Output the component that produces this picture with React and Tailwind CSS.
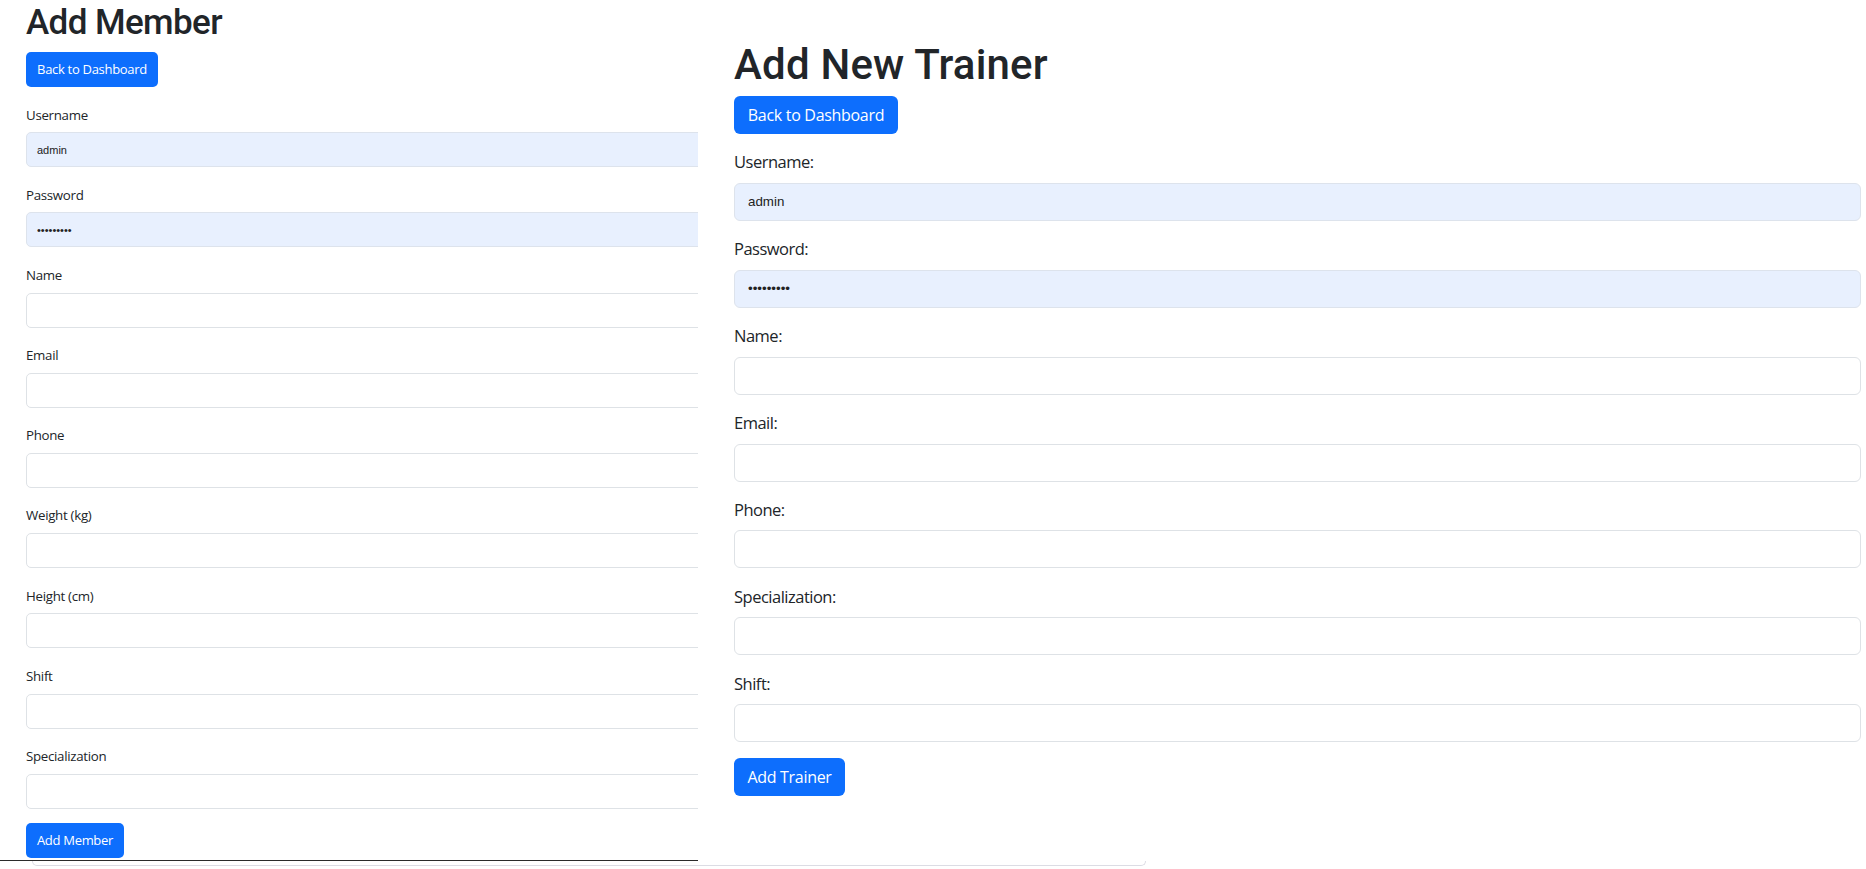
import React from 'react';

const uiFont = { fontFamily: '"Open Sans", "Noto Sans", sans-serif' };
const headFont = { fontFamily: 'Roboto, "Open Sans", sans-serif' };
const inputFont = { fontFamily: '"Liberation Sans", Arial, sans-serif' };

const memberFields = [
  { label: 'Username', value: 'admin', filled: true },
  { label: 'Password', value: 'adminpass', filled: true, type: 'password' },
  { label: 'Name' },
  { label: 'Email' },
  { label: 'Phone' },
  { label: 'Weight (kg)' },
  { label: 'Height (cm)' },
  { label: 'Shift' },
  { label: 'Specialization' },
];

const trainerFields = [
  { label: 'Username:', value: 'admin', filled: true },
  { label: 'Password:', value: 'adminpass', filled: true, type: 'password' },
  { label: 'Name:' },
  { label: 'Email:' },
  { label: 'Phone:' },
  { label: 'Specialization:' },
  { label: 'Shift:' },
];

const AddMemberPanel = () => {
  return (
    <div className="w-[698px] h-[861px] shrink-0 overflow-hidden border-b border-[#2b2b2b] bg-white pl-[26px] pt-[1.5px]">
      <h1 className="text-[35px] leading-[41px] font-medium tracking-[-0.6px] text-[#212529]" style={headFont}>
        Add Member
      </h1>
      <button className="mt-[9.5px] w-[132px] h-[35px] rounded-[5px] bg-[#0d6efd] text-white text-[13px] tracking-[-0.3px]">
        Back to Dashboard
      </button>
      {memberFields.map((f) => (
        <div key={f.label} className="mt-[17.5px] flex flex-col">
          <label className="h-[20px] leading-[20px] text-[13.3px] tracking-[-0.3px] text-[#212529]">{f.label}</label>
          <input
            readOnly
            type={f.type || 'text'}
            value={f.value || ''}
            className={`mt-[7.7px] w-[900px] h-[35px] shrink-0 rounded-[5px] border px-[10px] text-[11px] text-[#222] outline-none ${
              f.filled ? 'bg-[#e8f0fe] border-[#dde3ec]' : 'bg-white border-[#dee2e6]'
            }`}
            style={inputFont}
          />
        </div>
      ))}
      <button className="mt-[14.8px] w-[98px] h-[35px] rounded-[5px] bg-[#0d6efd] text-white text-[13px] tracking-[-0.3px]">
        Add Member
      </button>
    </div>
  );
};

const AddTrainerPanel = () => {
  return (
    <div className="flex-1 h-[861px] bg-white pl-[36px] pr-[5px] pt-[39.6px]">
      <h1 className="text-[42px] leading-[50px] font-medium tracking-[0.2px] text-[#212529]" style={headFont}>
        Add New Trainer
      </h1>
      <button className="mt-[6.4px] w-[164px] h-[38px] rounded-[6px] bg-[#0d6efd] text-white text-[16px] tracking-[-0.3px]">
        Back to Dashboard
      </button>
      {trainerFields.map((f) => (
        <div key={f.label} className="mt-[16.5px] flex flex-col">
          <label className="h-[24px] leading-[24px] text-[16.5px] tracking-[-0.5px] text-[#212529]">{f.label}</label>
          <input
            readOnly
            type={f.type || 'text'}
            value={f.value || ''}
            className={`mt-[8.4px] w-full h-[38px] shrink-0 rounded-[6px] border px-[13px] text-[13.33px] text-[#222] outline-none ${
              f.filled ? 'bg-[#e8f0fe] border-[#dde3ec]' : 'bg-white border-[#dee2e6]'
            }`}
            style={inputFont}
          />
        </div>
      ))}
      <button className="mt-[16.2px] w-[111px] h-[38px] rounded-[6px] bg-[#0d6efd] text-white text-[16px] tracking-[-0.3px]">
        Add Trainer
      </button>
    </div>
  );
};

const App = () => {
  return (
    <div className="w-[1866px] h-[869px] overflow-hidden bg-white" style={uiFont}>
      <div className="flex">
        <AddMemberPanel />
        <AddTrainerPanel />
      </div>
      <div className="ml-[32px] w-[1114px] h-[5px] rounded-b-[6px] border-x border-b border-[#dcdce4]" />
    </div>
  );
};

export default App;
